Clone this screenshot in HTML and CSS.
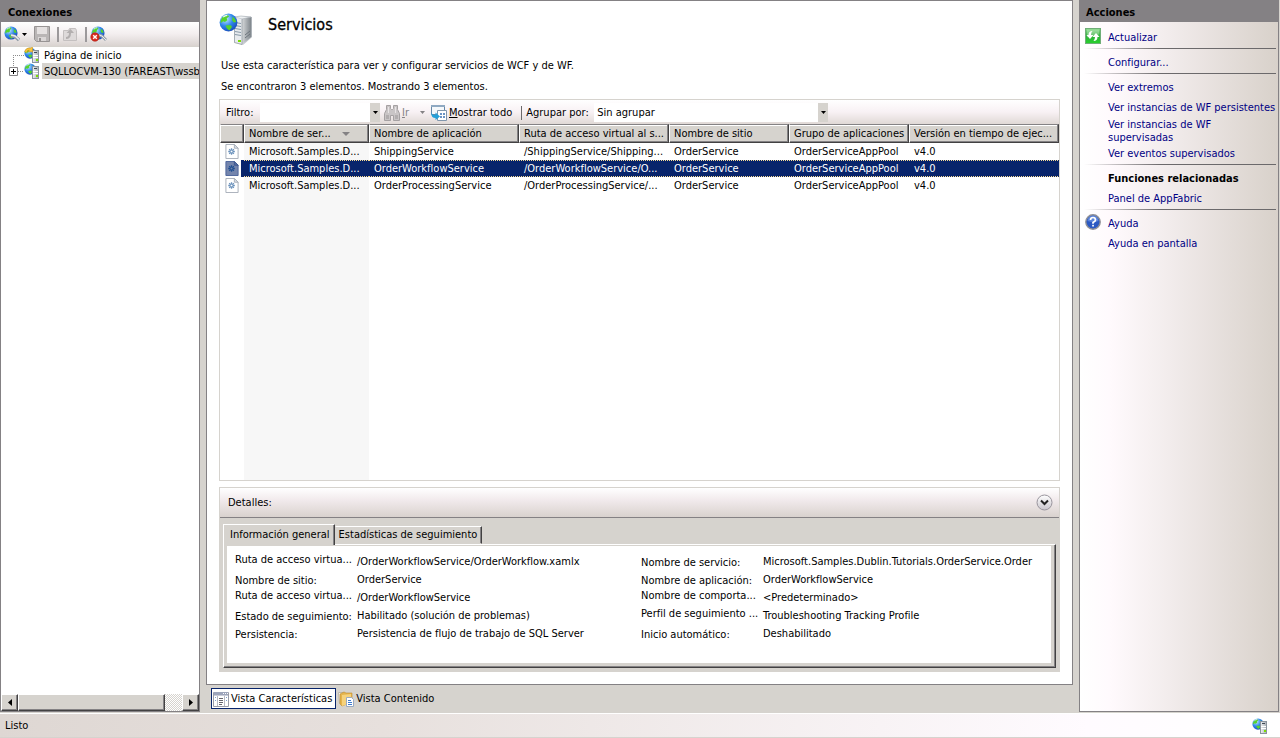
FILE: index.html
```
<!DOCTYPE html>
<html lang="es">
<head>
<meta charset="utf-8">
<title>Servicios</title>
<link rel="stylesheet" href="styles.css">
</head>
<body>
<svg class="defs" aria-hidden="true">
  <defs>
    <radialGradient id="gGlobe" cx=".35" cy=".3" r=".8"><stop offset="0" stop-color="#c4eaff"/><stop offset=".5" stop-color="#2f86ea"/><stop offset="1" stop-color="#1745b4"/></radialGradient>
    <linearGradient id="gSide" x1="0" x2="1"><stop offset="0" stop-color="#d5d8da"/><stop offset="1" stop-color="#7f868c"/></linearGradient>
    <linearGradient id="gFront" x1="0" x2="1"><stop offset="0" stop-color="#eef1f3"/><stop offset="1" stop-color="#a9afb5"/></linearGradient>
    <linearGradient id="gGreen" x1="0" x2="0" y1="0" y2="1"><stop offset="0" stop-color="#8ddb8d"/><stop offset=".5" stop-color="#2fae3a"/><stop offset="1" stop-color="#27d32c"/></linearGradient>
    <linearGradient id="gRound" x1="0" x2="0" y1="0" y2="1"><stop offset="0" stop-color="#ffffff"/><stop offset="1" stop-color="#c9c5cc"/></linearGradient>
    <symbol id="globe" viewBox="0 0 16 16">
      <circle cx="8" cy="8" r="7.500" fill="url(#gGlobe)"/>
      <path d="M2 5Q4 1.500 7 1.500L8.500 3 6.500 4.500 7 6 5 7.500 3.500 7 1.500 8.500Q1 6.500 2 5zM11.500 3Q14 5 14.500 7.500L12.500 8 11 6zM5.500 10.500L9.500 10 11 11.500 9 14.500Q6.500 14 5.500 10.500z" fill="#56d22c"/>
      <path d="M3.500 3.500Q5 2 7 2" stroke="#e8f8ff" fill="none"/>
    </symbol>
    <symbol id="site" viewBox="0 0 16 16">
      <use href="#globe" x="0" y="0" width="12" height="12"/>
      <rect x="8.500" y="3.500" width="6" height="12" fill="url(#gFront)" stroke="#8b949d"/>
      <path d="M10 5.500h3" stroke="#3f4a54"/><path d="M9 8.500h5M9 10.500h5" stroke="#fff"/>
      <rect x="12" y="12" width="2" height="2" fill="#7be000"/>
    </symbol>
    <symbol id="gearfile" viewBox="0 0 14 16">
      <path d="M.5.5h9l4 4v11H.5z" fill="#fff" stroke="#a5adb8"/>
      <path d="M9.500.5v4h4z" fill="#dde3ea" stroke="#a5adb8"/>
      <path d="M6.500 4.500v7M3 8h7M4 5.500l5 5M9 5.500l-5 5" stroke="#6d93bd" stroke-width="1.400"/>
      <circle cx="6.500" cy="8" r="1.400" fill="#fff" stroke="#6d93bd"/>
    </symbol>
  </defs>
</svg>

<div class="workspace">
  <aside class="panel connections">
    <h2 class="panel-title">Conexiones</h2>
    <div class="tree-tools">
      <button class="tool connect" aria-label="Conectar">
        <svg width="18" height="16" viewBox="0 0 18 16"><use href="#globe" x="0" y="0" width="14" height="14"/><path d="M7 9.500l4 1 4 3.500" stroke="#8d98a3" stroke-width="3.400" fill="none"/><path d="M7 9l4 1 4 3.500" stroke="#e6eaee" stroke-width="1.400" fill="none"/></svg>
        <svg width="5" height="3" viewBox="0 0 5 3"><path d="M0 0h5L2.500 3z"/></svg>
      </button>
      <button class="tool" disabled aria-label="Guardar">
        <svg width="16" height="16" viewBox="0 0 16 16"><path d="M.5.5h15v15h-13l-2-2z" fill="#b9b5b5" stroke="#979393"/><path d="M3 1h10v7H3z" fill="#e5e1e1"/><path d="M4 11h8v4H4z" fill="#dad6d6"/><path d="M5 12h2v3H5z" fill="#979393"/></svg>
      </button>
      <span class="tool-sep"></span>
      <button class="tool" disabled aria-label="Subir">
        <svg width="16" height="16" viewBox="0 0 16 16"><path d="M1.500 4.500h5l1-2h6l1 2v10h-13z" fill="#dedada" stroke="#c4c0c0"/><path d="M4 12q4 0 4-5" stroke="#b3afaf" stroke-width="2" fill="none"/><path d="M4.500 7L8.500 3l3.500 4z" fill="#b3afaf"/></svg>
      </button>
      <span class="tool-sep"></span>
      <button class="tool" aria-label="Desconectar">
        <svg width="17" height="16" viewBox="0 0 17 16"><use href="#globe" x="1" y="0" width="14" height="14"/><path d="M9 9l3 1 4 4" stroke="#98a3ad" stroke-width="3" fill="none"/><path d="M9 9l3 1 4 4" stroke="#e6eaee" fill="none"/><circle cx="5" cy="11" r="4.200" fill="#d92c20" stroke="#a8180e" stroke-width=".6"/><path d="M3.200 9.200l3.600 3.600M6.800 9.200l-3.600 3.600" stroke="#fff" stroke-width="1.400"/></svg>
      </button>
    </div>
    <ul class="tree">
      <li class="node">
        <svg class="branch" width="24" height="16" viewBox="0 0 24 16"><path d="M13.500 8v8M13 8.500h11" stroke="#8c8c8c" stroke-dasharray="1 1"/></svg>
        <svg width="16" height="16" viewBox="0 0 16 16"><use href="#site" width="16" height="16"/><path d="M.5 4.500q2-4.500 6-3.500l2-1v5l-4.500-.5L5.500 3q-2.500-.5-3 2.500z" fill="#f9c440" stroke="#d0900f" stroke-width=".5"/></svg>
        <span class="node-label">Página de inicio</span>
      </li>
      <li class="node">
        <svg class="branch" width="24" height="16" viewBox="0 0 24 16"><path d="M13.500 0v4M18 8.500h6" stroke="#8c8c8c" stroke-dasharray="1 1"/><path d="M9.500 4.500h8v8h-8z" fill="#fff" stroke="#848284"/><path d="M11 8.500h5M13.500 6v5" stroke="#000"/></svg>
        <svg width="16" height="16"><use href="#site" width="16" height="16"/></svg>
        <span class="node-label current">SQLLOCVM-130 (FAREAST\wssb</span>
      </li>
    </ul>
    <div class="hscroll">
      <button class="scroll-btn" aria-label="Izquierda"><svg width="4" height="7" viewBox="0 0 4 7"><path d="M4 0v7L0 3.500z"/></svg></button>
      <span class="thumb"></span>
      <button class="scroll-btn" aria-label="Derecha"><svg width="4" height="7" viewBox="0 0 4 7"><path d="M0 0v7l4-3.500z"/></svg></button>
    </div>
  </aside>

  <main class="center">
    <section class="feature">
      <header class="feature-head">
        <svg width="34" height="34" viewBox="0 0 34 34">
          <path d="M15 6l8-2 10 1v20l-9 8-9-2z" fill="url(#gFront)"/>
          <path d="M23 7l9-2v20l-9 7z" fill="url(#gSide)"/>
          <path d="M15 5l7-1 10 1-9 2z" fill="#eef1f3" stroke="#a4abb1" stroke-width=".6"/>
          <path d="M15 5.500l8 1.500v25l-8-2z" fill="#e8ebee"/>
          <path d="M16 10.500l6 1M16 13.500l6 1M16 16.500l6 1M16 19.500l6 1M16 22.500l6 1" stroke="#8799a8"/>
          <path d="M15.500 6v24.500l7.500 2V7" stroke="#8b939b" stroke-width=".7" fill="none"/>
          <path d="M26 26l5-4M26 23l5-4" stroke="#6d757d"/>
          <rect x="19" y="28" width="3" height="2" fill="#7be000"/>
          <use href="#globe" x="0" y="1" width="19" height="19"/>
        </svg>
        <h1>Servicios</h1>
      </header>
      <p class="intro">Use esta característica para ver y configurar servicios de WCF y de WF.</p>
      <p class="count">Se encontraron 3 elementos. Mostrando 3 elementos.</p>

      <div class="list">
        <div class="filter-bar">
          <label class="filter-label" for="filter">Filtro:</label>
          <span class="combo filter-combo"><input id="filter" type="text"><button class="drop" aria-label="Historial"><svg width="5" height="3" viewBox="0 0 5 3"><path d="M0 0h5L2.500 3z"/></svg></button></span>
          <button class="bar-btn go" disabled>
            <svg width="16" height="16" viewBox="0 0 16 16"><path d="M2.500.5h4v3l1 1h1l1-1v-3h4v4l2 4v7h-6v-5h-3v5h-6v-7l2-4z" fill="#c9c5c6" stroke="#a5a1a2"/><path d="M2 10h3v4H2zM11 10h3v4h-3z" fill="#b1adae"/><path d="M4.500 2v6M11.500 2v6" stroke="#e8e4e5"/></svg>
            <span><u>I</u>r</span>
            <svg class="go-arrow" width="5" height="3" viewBox="0 0 5 3"><path d="M0 0h5L2.500 3z" fill="#848284"/></svg>
          </button>
          <button class="bar-btn">
            <svg width="16" height="16" viewBox="0 0 16 16"><path d="M.5.5h13v9H.5z" fill="#f5f8fb" stroke="#6788a8"/><path d="M0 0h14v2H0z" fill="#8fa9c2"/><path d="M6.500 5.500h9v10h-9z" fill="#fff" stroke="#8197ad"/><path d="M9 8h2v2H9zM12 8h2v2h-2zM9 11h2v2H9zM12 11h2v2h-2z" fill="#6a93c4"/><path d="M.5 7q0 3 4 3V7.500L9 11.500 4.500 15v-2Q-.5 13 .5 7z" fill="#25a0d8"/></svg>
            <span><u>M</u>ostrar todo</span>
          </button>
          <span class="bar-sep"></span>
          <label class="group-label" for="group">Agrupar por:</label>
          <span class="combo group-combo"><select id="group"><option>Sin agrupar</option></select><span class="drop"><svg width="5" height="3" viewBox="0 0 5 3"><path d="M0 0h5L2.500 3z"/></svg></span></span>
        </div>
        <div class="grid-area">
          <table class="grid">
            <colgroup><col class="c-icon"><col class="c-name"><col class="c-wide"><col class="c-wide"><col class="c-mid"><col class="c-mid"><col></colgroup>
            <thead>
              <tr><th></th><th>Nombre de ser... <svg class="sort" width="8" height="4" viewBox="0 0 8 4"><path d="M0 0h8L4 4z" fill="#848284"/></svg></th><th>Nombre de aplicación</th><th>Ruta de acceso virtual al s...</th><th>Nombre de sitio</th><th>Grupo de aplicaciones</th><th>Versión en tiempo de ejec...</th></tr>
            </thead>
            <tbody>
              <tr><td><svg width="14" height="16"><use href="#gearfile"/></svg></td><td>Microsoft.Samples.D...</td><td>ShippingService</td><td>/ShippingService/Shipping...</td><td>OrderService</td><td>OrderServiceAppPool</td><td>v4.0</td></tr>
              <tr class="selected"><td><svg width="14" height="16" viewBox="0 0 14 16"><path d="M.5.5h9l4 4v11H.5z" fill="#7485ad" stroke="#4a629b"/><path d="M9.500.5v4h4z" fill="#5670a4" stroke="#3d568f"/><path d="M6.500 4.500v7M3 8h7M4 5.500l5 5M9 5.500l-5 5" stroke="#204f91" stroke-width="1.400"/><circle cx="6.500" cy="8" r="1.400" fill="#7485ad" stroke="#204f91"/></svg></td><td>Microsoft.Samples.D...</td><td>OrderWorkflowService</td><td>/OrderWorkflowService/O...</td><td>OrderService</td><td>OrderServiceAppPool</td><td>v4.0</td></tr>
              <tr><td><svg width="14" height="16"><use href="#gearfile"/></svg></td><td>Microsoft.Samples.D...</td><td>OrderProcessingService</td><td>/OrderProcessingService/...</td><td>OrderService</td><td>OrderServiceAppPool</td><td>v4.0</td></tr>
            </tbody>
          </table>
        </div>
      </div>

      <section class="details">
        <header class="details-head">
          <h2>Detalles:</h2>
          <button class="collapse" aria-label="Contraer"><svg width="17" height="17" viewBox="0 0 17 17"><circle cx="8.500" cy="8.500" r="7.500" fill="url(#gRound)" stroke="#99959d"/><path d="M5 6.500l3.500 3.500L12 6.500" stroke="#222" stroke-width="2" fill="none"/></svg></button>
        </header>
        <div class="tabs" role="tablist">
          <button class="tab active" role="tab" aria-selected="true">Información general</button>
          <button class="tab" role="tab" aria-selected="false">Estadísticas de seguimiento</button>
        </div>
        <div class="tab-page" role="tabpanel">
          <dl class="facts">
            <dt class="long">Ruta de acceso virtua...</dt><dd>/OrderWorkflowService/OrderWorkflow.xamlx</dd>
            <dt>Nombre de servicio:</dt><dd>Microsoft.Samples.Dublin.Tutorials.OrderService.Order</dd>
            <dt>Nombre de sitio:</dt><dd>OrderService</dd>
            <dt>Nombre de aplicación:</dt><dd>OrderWorkflowService</dd>
            <dt class="long">Ruta de acceso virtua...</dt><dd>/OrderWorkflowService</dd>
            <dt class="long">Nombre de comporta...</dt><dd>&lt;Predeterminado&gt;</dd>
            <dt>Estado de seguimiento:</dt><dd>Habilitado (solución de problemas)</dd>
            <dt class="long">Perfil de seguimiento ...</dt><dd>Troubleshooting Tracking Profile</dd>
            <dt>Persistencia:</dt><dd>Persistencia de flujo de trabajo de SQL Server</dd>
            <dt>Inicio automático:</dt><dd>Deshabilitado</dd>
          </dl>
        </div>
      </section>
    </section>

    <nav class="views">
      <button class="view active">
        <svg width="16" height="16" viewBox="0 0 16 16"><path d="M.5 1.500h15v14H.5z" fill="#fff" stroke="#9a9ca8"/><path d="M1 1h14v3H1z" fill="#9da5bb"/><path d="M4.500 4v11M11.500 4v11" stroke="#b9bbc5"/><path d="M1 4.500h14" stroke="#c9ccd8"/><path d="M6 7.500h4M6 9.500h4M6 11.500h4M6 13.500h3" stroke="#66656d"/><path d="M2 6.500h1M2 9.500h1M13 6.500h1M13 9.500h1" stroke="#7fa3d2"/><path d="M10 2.500h1M12 2.500h1M14 2.500h1" stroke="#fff"/></svg>
        Vista Características
      </button>
      <button class="view">
        <svg width="16" height="16" viewBox="0 0 16 16"><path d="M.5 1.500h5v11h-4z" fill="#f4f2ee" stroke="#bcb7aa"/><path d="M2 3l4-2 2 1h6v9l-10 4-2-2z" fill="#e5b44c" stroke="#c08b2b" stroke-width=".6"/><path d="M4 4l9-1v9l-9 3z" fill="#f6d27c"/><path d="M8.500 6.500h5l2 2v7h-7z" fill="#fff" stroke="#9aa9bf"/><path d="M10 9.500h3M10 11.500h4M10 13.500h4" stroke="#3c7bd0"/></svg>
        Vista Contenido
      </button>
    </nav>
  </main>

  <aside class="panel actions">
    <h2 class="panel-title">Acciones</h2>
    <nav class="action-list">
      <a class="action" href="#"><svg class="action-icon" width="16" height="16" viewBox="0 0 16 16"><rect x=".5" y=".5" width="15" height="15" fill="url(#gGreen)" stroke="#6fae78"/><path d="M2 1.500h12v5q-7 0-12 3z" fill="#fff" opacity=".25"/><path d="M7.500 3q-4 0-4 4H1.500L5 11l3.500-4H6q0-2.500 1.500-4zM8.500 13q4 0 4-4h2L11 5 7.500 9H10q0 2.500-1.500 4z" fill="#fff"/></svg>Actualizar</a>
      <hr>
      <a class="action" href="#">Configurar...</a>
      <hr>
      <a class="action" href="#">Ver extremos</a>
      <a class="action" href="#">Ver instancias de WF persistentes</a>
      <a class="action two-line" href="#">Ver instancias de WF<br>supervisadas</a>
      <a class="action" href="#">Ver eventos supervisados</a>
      <hr>
      <h3 class="action-title">Funciones relacionadas</h3>
      <a class="action" href="#">Panel de AppFabric</a>
      <hr>
      <a class="action" href="#"><svg class="action-icon" width="16" height="16" viewBox="0 0 16 16"><circle cx="8" cy="8" r="7.200" fill="#2b59c3" stroke="#8f9096" stroke-width="1.400"/><path d="M2.500 7a5.500 5.500 0 0 1 11 0q-5 2-11 0z" fill="#7da2ea" opacity=".6"/><path d="M5.500 6q0-2.500 2.500-2.500T10.500 6Q10.500 7.200 8 8.500v1.200" stroke="#fff" stroke-width="1.700" fill="none"/><rect x="7.200" y="10.800" width="1.700" height="1.700" fill="#fff"/></svg>Ayuda</a>
      <a class="action" href="#">Ayuda en pantalla</a>
    </nav>
  </aside>
</div>

<footer class="status">
  <span>Listo</span>
  <svg width="16" height="16"><use href="#site" width="16" height="16"/></svg>
</footer>
</body>
</html>
```
FILE: styles.css
```
* { box-sizing: border-box; }

body {
  margin: 0;
  height: 100vh;
  display: flex;
  flex-direction: column;
  background: #d6d3ce;
  color: #000;
  font: 11px/16px "DejaVu Sans Condensed", "DejaVu Sans", sans-serif;
  overflow: hidden;
}

h1, h2, h3, p, ul, dl, dd { margin: 0; padding: 0; }
button, input, select { font: inherit; color: inherit; }
button { border: 0; padding: 0; background: none; white-space: nowrap; }
svg { display: block; flex: none; }
.defs { position: absolute; width: 0; height: 0; }

.workspace {
  flex: 1;
  min-height: 0;
  display: grid;
  grid-template-columns: 200px minmax(0, 1fr) 200px;
  column-gap: 6px;
  padding: 0 1px 1px 0;
}

/* Side panels */
.panel {
  display: flex;
  flex-direction: column;
  min-width: 0;
  background: #fff;
  border: 1px solid #848184;
  border-top: 0;
}
.panel-title {
  height: 22px;
  padding-left: 7px;
  background: #848184;
  font-size: 11px;
  line-height: 25px;
}

.tree-tools {
  display: flex;
  align-items: center;
  gap: 3px;
  height: 25px;
  padding-left: 3px;
  background: linear-gradient(#fff, #f3eeef 50%, #d9d3d0);
  border-bottom: 1px solid #d6d3ce;
}
.tool { display: flex; align-items: center; }
.connect { margin-right: 4px; }
.tool-sep { width: 2px; height: 15px; margin-left: 4px; background: #9c999b; }

.tree { flex: 1; list-style: none; overflow: hidden; }
.node { display: flex; height: 16px; margin-left: -1px; }
.node-label { padding-left: 4px; line-height: 17px; white-space: nowrap; }
.current { flex: 1; margin-left: 2px; padding-left: 2px; background: #d6d3ce; }

.hscroll {
  display: flex;
  height: 17px;
  background: repeating-conic-gradient(#fff 0 25%, #d6d3ce 0 50%) 0 0 / 2px 2px;
}
.scroll-btn, .thumb {
  background: #d6d3ce;
  border: 1px solid;
  border-color: #fff #424142 #424142 #fff;
  box-shadow: inset -1px -1px #848284;
}
.scroll-btn { display: grid; place-items: center; width: 17px; }
.thumb { width: 147px; }
.hscroll .scroll-btn:last-child { margin-left: auto; }

/* Centre */
.center { display: flex; flex-direction: column; min-width: 0; }
.feature {
  flex: 1;
  min-height: 0;
  display: flex;
  flex-direction: column;
  padding: 11px 12px 12px;
  background: #fff;
  border: 1px solid #848184;
}
.feature-head { display: flex; height: 34px; gap: 15px; }
h1 { font-size: 16px; line-height: 26px; font-weight: 400; -webkit-text-stroke: 0.3px; }
.intro, .count { padding-left: 2px; }
.intro { padding-top: 12px; }
.count { padding-top: 5px; padding-bottom: 4px; }

.list {
  flex: 1;
  min-height: 0;
  display: flex;
  flex-direction: column;
  border: 1px solid #d6d3ce;
}
.filter-bar {
  display: flex;
  align-items: center;
  height: 24px;
  padding-top: 1px;
  padding-left: 6px;
  background: linear-gradient(#fff, #f8f1f4 50%, #e0d9d6);
}
.filter-label { width: 34px; }
.combo { position: relative; display: flex; height: 19px; background: #fff; }
.combo input, .combo select {
  appearance: none;
  flex: 1;
  min-width: 0;
  padding: 0 3px;
  border: 0;
  background: #fff;
}
.filter-combo { width: 120px; margin-right: 4px; }
.group-combo { width: 234px; }
.drop { display: grid; place-items: center; width: 10px; background: #d6d3ce; }
.group-combo .drop { position: absolute; top: 0; right: 0; bottom: 0; pointer-events: none; }
.bar-btn { display: flex; align-items: center; gap: 2px; }
.go { margin-right: 6px; color: #848284; }
.go-arrow { margin-left: 9px; }
.bar-sep { width: 1px; height: 14px; margin: 0 4px 0 9px; background: #6b696b; }
.group-label { width: 68px; white-space: nowrap; }

/* The sorted column is tinted down to the bottom of the list */
.grid-area {
  flex: 1;
  background: linear-gradient(#f7f7f7, #f7f7f7) 24px 0 / 125px 100% no-repeat;
}
.grid { width: 100%; border-collapse: separate; border-spacing: 0; table-layout: fixed; }
.c-icon { width: 24px; }
.c-name { width: 125px; }
.c-wide { width: 150px; }
.c-mid { width: 120px; }
.grid th, .grid td { text-align: left; white-space: nowrap; overflow: hidden; }
.grid th {
  height: 19px;
  padding: 0 0 0 4px;
  line-height: 16px;
  font-weight: 400;
  background: #d6d3ce;
  border: 1px solid;
  border-color: #848284 #424142 #424142 #fff;
  box-shadow: inset -1px -1px #848284, inset 0 1px #fff;
}
.sort { display: inline-block; margin-left: 8px; vertical-align: middle; }
.grid td { height: 17px; padding: 1px 0 1px 5px; line-height: 15px; }
.grid td svg { height: 15px; }
.selected td {
  color: #fff;
  background:
    repeating-linear-gradient(90deg, #f7db94 0 1px, #08246b 1px 2px) 0 0 / 100% 1px no-repeat,
    repeating-linear-gradient(90deg, #f7db94 0 1px, #08246b 1px 2px) 0 100% / 100% 1px no-repeat,
    #08246b;
}
.selected td:first-child { background: linear-gradient(90deg, transparent 21px, #08246b 21px); }

/* Details */
.details { margin-top: 6px; padding: 0 4px 3px; background: #d6d3ce; border: 1px solid #d6d3ce; border-width: 1px 0; }
.details-head {
  display: flex;
  justify-content: space-between;
  align-items: center;
  height: 30px;
  margin: 0 -3px 6px;
  padding: 0 6px 0 8px;
  background: linear-gradient(#fff, #f2ebed 40%, #d9d2ce);
  border-bottom: 1px solid #848184;
}
.details-head h2 { font-size: 11px; font-weight: 400; }
.tabs { display: flex; align-items: flex-end; height: 20px; }
.tab {
  height: 18px;
  padding: 0 4px 0 3px;
  border: 1px solid;
  border-color: #fff #424142 transparent #d6d3ce;
  box-shadow: inset -1px 0 #848284;
}
.tab.active {
  position: relative;
  height: 21px;
  margin-bottom: -1px;
  padding: 0 4px 1px 6px;
  background: #d6d3ce;
  border-left-color: #fff;
  border-bottom: 0;
}
.tab-page {
  height: 124px;
  padding: 1px 4px 4px 3px;
  border: 1px solid;
  border-color: #fff #424142 #424142 #fff;
  box-shadow: inset -1px -1px #848284;
}
.facts {
  display: grid;
  grid-template-columns: 122px 284px 122px minmax(0, 280px);
  grid-auto-rows: 18px;
  align-items: start;
  height: 100%;
  padding: 7px 8px;
  background: #fff;
  white-space: nowrap;
}
.facts dt { line-height: 20px; }
.facts dt.long { line-height: 14px; }
.facts dd { line-height: 18px; }

.views { display: flex; height: 27px; padding: 3px 0 3px 5px; }
.view { display: flex; align-items: center; gap: 2px; border: 1px solid transparent; padding: 0 3px 0 1px; }
.view.active { background: #fff; border-color: #08246b; }

/* Actions */
.actions { background: linear-gradient(90deg, #fff, #fffafd 15%, #f2ecec 45%, #d8d1ca); }
.actions .panel-title { margin-left: -1px; }
.action-list { padding: 6px 2px 0 4px; }
.action, .action-title {
  position: relative;
  display: block;
  padding-left: 24px;
  color: #000084;
  font-size: 11px;
  line-height: 20px;
  text-decoration: none;
  white-space: nowrap;
}
.action-title { color: #000; }
.action-icon { position: absolute; left: 1px; top: 0; }
.two-line { line-height: 13px; }
.action-list hr { height: 1px; margin: 0 0 4px; border: 0; background: linear-gradient(90deg, transparent, #6b696b 40%); }

.status {
  display: flex;
  justify-content: space-between;
  align-items: center;
  height: 25px;
  padding: 0 12px 0 5px;
  background: linear-gradient(90deg, #ded7d3, #e7e0dd 30%, #fffbff 85%, #fff);
  border-top: 1px solid #fff;
  border-bottom: 1px solid #d6d3ce;
}
```
